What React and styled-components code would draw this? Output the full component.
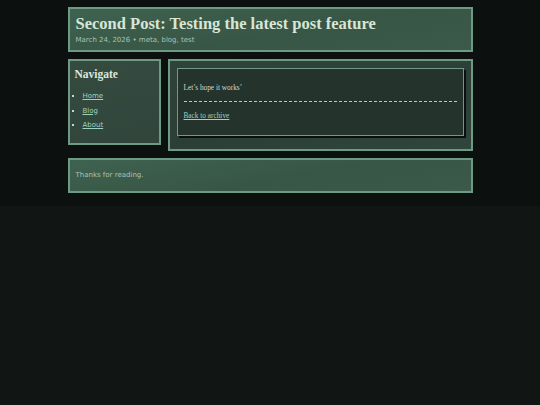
import styled, { createGlobalStyle } from 'styled-components';

const GlobalStyle = createGlobalStyle`
  *, *::before, *::after {
    box-sizing: border-box;
  }
  html {
    background: #111615;
  }
  body {
    margin: 0;
    padding: 7px 0 13px;
    background: #0c100e;
    color: #d6e4d8;
    font-family: "DejaVu Sans", Verdana, sans-serif;
  }
`;

const post = {
  title: 'Second Post: Testing the latest post feature',
  date: 'March 24, 2026',
  tags: ['meta', 'blog', 'test'],
  body: 'Let\u2019s hope it works\u2019',
};

const navLinks = ['Home', 'Blog', 'About'];

const App = () => (
  <>
    <GlobalStyle />
    <Page>
      <Header>
        <Title>{post.title}</Title>
        <Meta>{post.date} • {post.tags.join(', ')}</Meta>
      </Header>
      <Columns>
        <Sidebar>
          <SideTitle>Navigate</SideTitle>
          <NavList>
            {navLinks.map((link) => (
              <li key={link}><a href="#">{link}</a></li>
            ))}
          </NavList>
        </Sidebar>
        <Main>
          <Card>
            <Body>{post.body}</Body>
            <BackLink href="#">Back to archive</BackLink>
          </Card>
        </Main>
      </Columns>
      <Footer>Thanks for reading.</Footer>
    </Page>
  </>
);

export default App;

const Page = styled.div`
  width: 75%;
  margin: 0 auto;
  display: flex;
  flex-direction: column;
  gap: 7px;
`;

const Panel = styled.div`
  border: 2px solid #6d9a84;
  background: linear-gradient(170deg, #3f6250 0%, #385645 55%, #3b5a4a 100%);
`;

const Header = styled(Panel)`
  padding: 5px 6px 5px;
`;

const Title = styled.h1`
  margin: 0;
  font-family: "Liberation Serif", Georgia, serif;
  font-size: 16.5px;
  font-weight: bold;
  line-height: 19px;
  color: #d9e6d6;
`;

const Meta = styled.div`
  margin-top: 2px;
  font-size: 7px;
  line-height: 10px;
  color: #a9c2b2;
`;

const Columns = styled.div`
  display: flex;
  align-items: flex-start;
  gap: 7px;
`;

const Sidebar = styled(Panel)`
  width: 93px;
  flex: none;
  padding: 6px 5px 13px;
  background: linear-gradient(170deg, #354b40 0%, #31453b 100%);
`;

const SideTitle = styled.h2`
  margin: 0;
  font-family: "Liberation Serif", Georgia, serif;
  font-size: 11.5px;
  font-weight: bold;
  line-height: 14px;
  color: #dde8d9;
`;

const NavList = styled.ul`
  margin: 10px 0 0;
  padding: 0 0 0 8px;
  list-style: square;
  font-size: 7px;
  line-height: 10px;
  color: #c8d8cc;

  li + li {
    margin-top: 4.5px;
  }

  a {
    color: #9fd2bb;
  }
`;

const Main = styled(Panel)`
  flex: 1;
  padding: 7px 7px 13px;
  background: linear-gradient(170deg, #2f433a 0%, #2c3f36 60%, #30463b 100%);
`;

const Card = styled.article`
  border: 1px solid #6d9a84;
  background: #25332d;
  box-shadow: 2px 2px 0 #0b0f0d;
  padding: 14px 6px 14px;
  font-family: "Liberation Serif", Georgia, serif;
  font-size: 7.3px;
  line-height: 10px;
`;

const Body = styled.p`
  margin: 0 0 9px;
  padding-bottom: 8px;
  border-bottom: 1px dashed #b9ccbf;
  color: #cfdcd1;
`;

const BackLink = styled.a`
  display: block;
  color: #9fd2bb;
`;

const Footer = styled(Panel)`
  padding: 10px 6px 11px;
  font-size: 7px;
  line-height: 10px;
  color: #aac2b2;
`;
